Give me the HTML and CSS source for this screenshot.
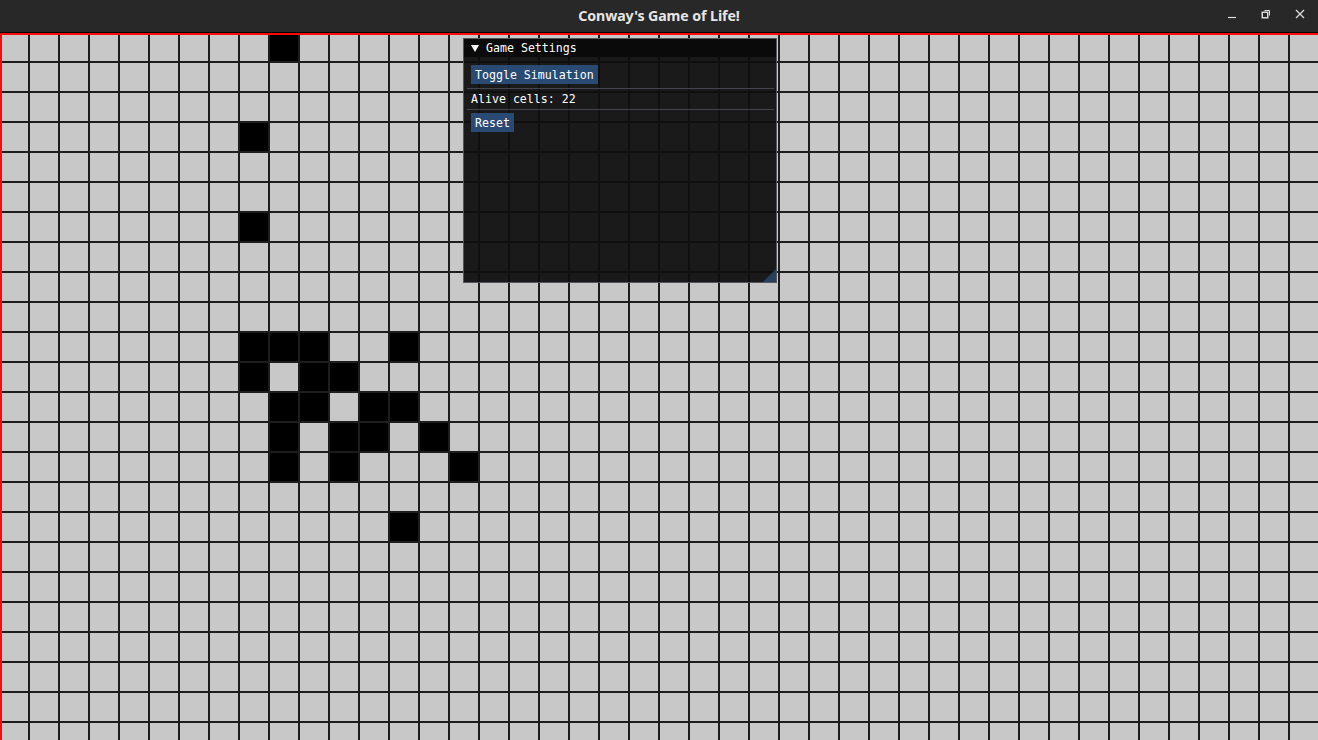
FILE: index.html
```html
<!DOCTYPE html>
<html lang="en">
<head>
<meta charset="utf-8">
<title>Conway's Game of Life!</title>
<link rel="stylesheet" href="styles.css">
</head>
<body>
<div class="app">
  <header class="titlebar">
    <div class="titlebar-spacer"></div>
    <div class="titlebar-title">Conway's Game of Life!</div>
    <div class="titlebar-controls">
      <span class="ctl">
        <svg width="10" height="10" viewBox="0 0 10 10"><path d="M1 8.5H9" stroke="#dadada" stroke-width="1.2" fill="none"/></svg>
      </span>
      <span class="ctl">
        <svg width="10" height="10" viewBox="0 0 10 10"><rect x="1.25" y="3.25" width="5.5" height="5.5" stroke="#dadada" stroke-width="1.5" fill="none"/><path d="M3.5 1.5H8.5V6.5" stroke="#dadada" stroke-width="1" fill="none"/></svg>
      </span>
      <span class="ctl">
        <svg width="10" height="10" viewBox="0 0 10 10"><path d="M1 1L9 9M9 1L1 9" stroke="#dadada" stroke-width="1.3" fill="none"/></svg>
      </span>
    </div>
  </header>
  <main class="board">
    <div class="grid" id="grid"></div>
    <section class="settings">
      <div class="settings-title"><span class="caret"></span><span>Game Settings</span></div>
      <div class="settings-body">
        <button class="im-btn">Toggle Simulation</button>
        <div class="im-sep"></div>
        <div class="im-text">Alive cells: 22</div>
        <div class="im-sep"></div>
        <button class="im-btn">Reset</button>
      </div>
      <div class="grip"></div>
    </section>
  </main>
</div>
<script src="script.js"></script>
</body>
</html>
```

FILE: styles.css
```css
* { box-sizing: border-box; }
html, body {
  margin: 0;
  padding: 0;
  width: 1318px;
  height: 740px;
  overflow: hidden;
  background: #282828;
}
.app {
  display: flex;
  flex-direction: column;
  width: 1318px;
  height: 740px;
}
.titlebar {
  height: 33px;
  flex: 0 0 33px;
  background: #282828;
  border-bottom: 1px solid #050505;
  display: grid;
  grid-template-columns: 1fr auto 1fr;
  align-items: center;
}
.titlebar-title {
  font-family: "Noto Sans", "Open Sans", sans-serif;
  font-weight: 700;
  font-size: 14.2px;
  color: #e6e6e6;
  letter-spacing: -0.1px;
  padding-bottom: 1px;
}
.titlebar-controls {
  justify-self: end;
  display: flex;
  padding-right: 1px;
  height: 32px;
}
.ctl {
  width: 34px;
  height: 32px;
  display: flex;
  align-items: center;
  justify-content: center;
  padding-bottom: 4px;
}
.board {
  position: relative;
  flex: 1 1 auto;
  overflow: hidden;
  background: #1d1d1d;
}
.board::after {
  content: "";
  position: absolute;
  inset: 0;
  border-left: 2px solid #ff0a0a;
  border-top: 2px solid #ff0a0a;
  pointer-events: none;
}
.grid {
  display: grid;
  grid-template-columns: repeat(44, 28px);
  grid-auto-rows: 28px;
  gap: 2px;
}
.cell { background: #c8c8c8; }
.cell.alive { background: #000; }

.settings {
  position: absolute;
  left: 463px;
  top: 5px;
  width: 314px;
  height: 245px;
  background: rgba(15, 15, 15, 0.94);
  border: 1px solid #55555f;
  display: flex;
  flex-direction: column;
  font-family: "DejaVu Sans Mono", "Liberation Mono", monospace;
  font-size: 11.6px;
  color: #ffffff;
}
.settings-title {
  height: 18px;
  background: #0a0a0a;
  display: flex;
  align-items: center;
  padding-left: 7px;
  padding-top: 1px;
  line-height: 13px;
}
.caret {
  width: 0;
  height: 0;
  border-left: 4px solid transparent;
  border-right: 4px solid transparent;
  border-top: 7px solid #ffffff;
  margin-right: 7px;
}
.settings-body {
  display: flex;
  flex-direction: column;
  align-items: flex-start;
  padding: 8px 7px 0 7px;
}
.im-btn {
  font: inherit;
  color: #ffffff;
  background: #294a73;
  border: 0;
  border-radius: 0;
  padding: 4px 4px 2px 4px;
  line-height: 13px;
  height: 19px;
  margin: 0;
}
.im-sep {
  align-self: stretch;
  height: 1px;
  background: #45454d;
  margin: 4px -5px 3px -4px;
}
.im-text {
  line-height: 13px;
  height: 13px;
  padding-top: 1px;
  overflow: visible;
}
.grip {
  position: absolute;
  right: 0;
  bottom: 0;
  width: 13px;
  height: 13px;
  background: #27405f;
  clip-path: polygon(100% 0, 100% 100%, 0 100%);
}
```

FILE: script.js
```js
(function () {
  var grid = document.getElementById('grid');
  var alive = {
    "0,9":1, "3,8":1, "6,8":1,
    "10,8":1, "10,9":1, "10,10":1, "10,13":1,
    "11,8":1, "11,10":1, "11,11":1,
    "12,9":1, "12,10":1, "12,12":1, "12,13":1,
    "13,9":1, "13,11":1, "13,12":1, "13,14":1,
    "14,9":1, "14,11":1, "14,15":1,
    "16,13":1
  };
  var frag = document.createDocumentFragment();
  for (var r = 0; r < 24; r++) {
    for (var c = 0; c < 44; c++) {
      var d = document.createElement('div');
      d.className = alive[r + ',' + c] ? 'cell alive' : 'cell';
      frag.appendChild(d);
    }
  }
  grid.appendChild(frag);
})();
```
